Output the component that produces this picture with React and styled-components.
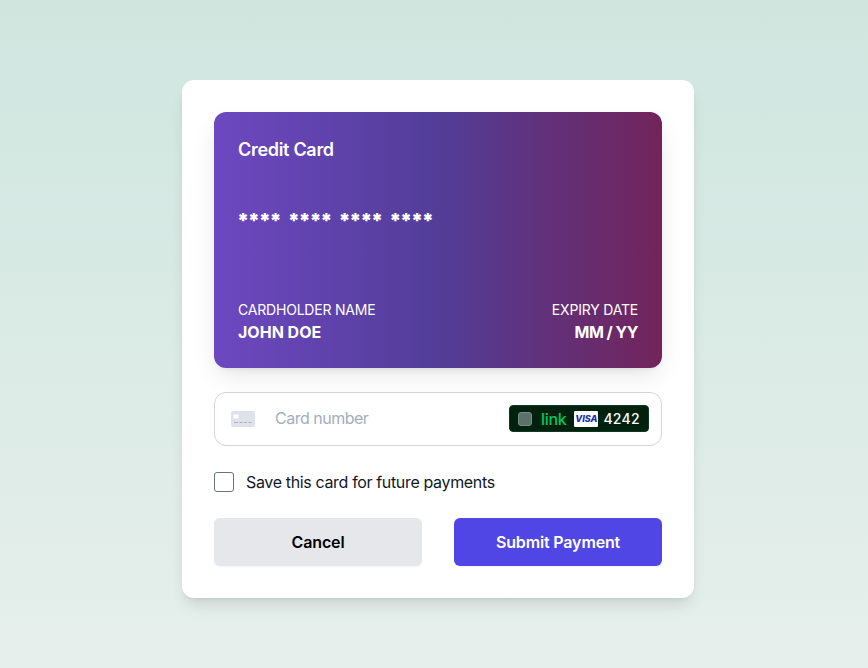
import React from 'react';
import styled, { createGlobalStyle } from 'styled-components';

const GlobalStyle = createGlobalStyle`
  html, body {
    margin: 0;
    padding: 0;
    height: 100%;
  }
  body {
    font-family: Inter, "Liberation Sans", sans-serif;
    -webkit-font-smoothing: antialiased;
  }
  * {
    box-sizing: border-box;
  }
`;

const Page = styled.div`
  min-height: 668px;
  padding: 80px 0 0 8px;
  display: flex;
  align-items: flex-start;
  justify-content: center;
  background: linear-gradient(to bottom, #cfe6df, #e6efec);
`;

const Panel = styled.form`
  width: 512px;
  padding: 32px;
  background: #fff;
  border-radius: 12px;
  box-shadow: 0 10px 15px -3px rgba(0, 0, 0, 0.1), 0 4px 6px -4px rgba(0, 0, 0, 0.1);
`;

const CardPreview = styled.div`
  height: 256px;
  padding: 24px;
  display: flex;
  flex-direction: column;
  border-radius: 12px;
  color: #fff;
  background: linear-gradient(to right, #6d48c0 0%, #523d98 50%, #72245a 100%);
  box-shadow: 0 10px 25px -3px rgba(0, 0, 0, 0.1), 0 4px 6px -4px rgba(0, 0, 0, 0.1);
`;

const CardTitle = styled.div`
  font-size: 18px;
  line-height: 28px;
  font-weight: 600;
  letter-spacing: -0.3px;
`;

const CardNumber = styled.div`
  margin: 43px 0 0 -1px;
  font-size: 20px;
  line-height: 28px;
  font-weight: 900;
  letter-spacing: -1.35px;
  word-spacing: 4.85px;
`;

const CardFooter = styled.div`
  margin-top: auto;
  display: flex;
  justify-content: space-between;
`;

const CardField = styled.div`
  text-align: ${(p) => (p.$right ? 'right' : 'left')};
`;

const FieldLabel = styled.div`
  font-size: 14px;
  line-height: 20px;
  letter-spacing: -0.2px;
`;

const FieldValue = styled.div`
  font-size: 16px;
  line-height: 24px;
  font-weight: 700;
  letter-spacing: ${(p) => (p.$tight ? '-0.5px' : '0')};
`;

const CardInput = styled.div`
  margin-top: 24px;
  height: 54px;
  padding: 0 12px 1px 16px;
  display: flex;
  align-items: center;
  border: 1px solid #d1d5db;
  border-radius: 12px;
`;

const InputIcon = styled.svg`
  width: 24px;
  height: 16px;
  flex: none;
`;

const Placeholder = styled.span`
  flex: 1;
  margin: 0 0 1px 20px;
  font-size: 16px;
  letter-spacing: -0.5px;
  color: #a3aebd;
`;

const LinkBadge = styled.div`
  width: 140px;
  height: 27px;
  padding: 0 8px;
  display: flex;
  align-items: center;
  border-radius: 4px;
  border: 1px solid #0b3a20;
  background: #01210f;
`;

const BadgeDot = styled.span`
  width: 14px;
  height: 14px;
  flex: none;
  border-radius: 3px;
  background: #5c7268;
  border: 1px solid #7a8c83;
`;

const LinkWord = styled.span`
  margin-left: 9px;
  font-size: 16px;
  font-weight: 500;
  letter-spacing: -0.3px;
  color: #00c85a;
`;

const VisaTag = styled.span`
  margin-left: 8px;
  width: 24px;
  height: 16px;
  flex: none;
  display: flex;
  align-items: center;
  justify-content: center;
  border-radius: 1px;
  background: #fff;
  font-size: 9px;
  font-weight: 800;
  font-style: italic;
  color: #1a2bb0;
`;

const Last4 = styled.span`
  margin-left: auto;
  font-size: 14px;
  font-weight: 500;
  letter-spacing: 0.3px;
  color: #fff;
`;

const SaveRow = styled.label`
  margin-top: 26px;
  display: flex;
  align-items: center;
  gap: 12px;
  font-size: 16px;
  line-height: 20px;
  letter-spacing: -0.35px;
  color: #111827;
`;

const CheckBox = styled.span`
  width: 20px;
  height: 20px;
  flex: none;
  background: #fff;
  border: 1px solid #6b7280;
  border-radius: 3px;
`;

const Actions = styled.div`
  margin-top: 26px;
  display: grid;
  grid-template-columns: 1fr 1fr;
  gap: 32px;
`;

const Button = styled.button`
  height: 48px;
  border: none;
  border-radius: 6px;
  font-family: inherit;
  font-size: 16px;
  font-weight: 600;
  letter-spacing: -0.15px;
  cursor: pointer;
  color: ${(p) => (p.$primary ? '#fff' : '#000')};
  background: ${(p) => (p.$primary ? '#4f46e5' : '#e5e7eb')};
  box-shadow: 0 1px 2px rgba(0, 0, 0, 0.05);
`;

export default function App() {
  return (
    <>
      <GlobalStyle />
      <Page>
        <Panel>
          <CardPreview>
            <CardTitle>Credit Card</CardTitle>
            <CardNumber>**** **** **** ****</CardNumber>
            <CardFooter>
              <CardField>
                <FieldLabel>CARDHOLDER NAME</FieldLabel>
                <FieldValue>JOHN DOE</FieldValue>
              </CardField>
              <CardField $right>
                <FieldLabel>EXPIRY DATE</FieldLabel>
                <FieldValue $tight>MM / YY</FieldValue>
              </CardField>
            </CardFooter>
          </CardPreview>
          <CardInput>
            <InputIcon viewBox="0 0 24 16">
              <rect width="24" height="16" rx="2" fill="#dfe2ea" />
              <rect x="2.5" y="3.5" width="5" height="4" fill="#fff" />
              <path d="M3 11.5h4M8.5 11.5h3M13 11.5h3M17.5 11.5h3" stroke="#a9afbd" strokeWidth="1" />
            </InputIcon>
            <Placeholder>Card number</Placeholder>
            <LinkBadge>
              <BadgeDot />
              <LinkWord>link</LinkWord>
              <VisaTag>VISA</VisaTag>
              <Last4>4242</Last4>
            </LinkBadge>
          </CardInput>
          <SaveRow>
            <CheckBox />
            Save this card for future payments
          </SaveRow>
          <Actions>
            <Button type="button">Cancel</Button>
            <Button type="button" $primary>Submit Payment</Button>
          </Actions>
        </Panel>
      </Page>
    </>
  );
}
